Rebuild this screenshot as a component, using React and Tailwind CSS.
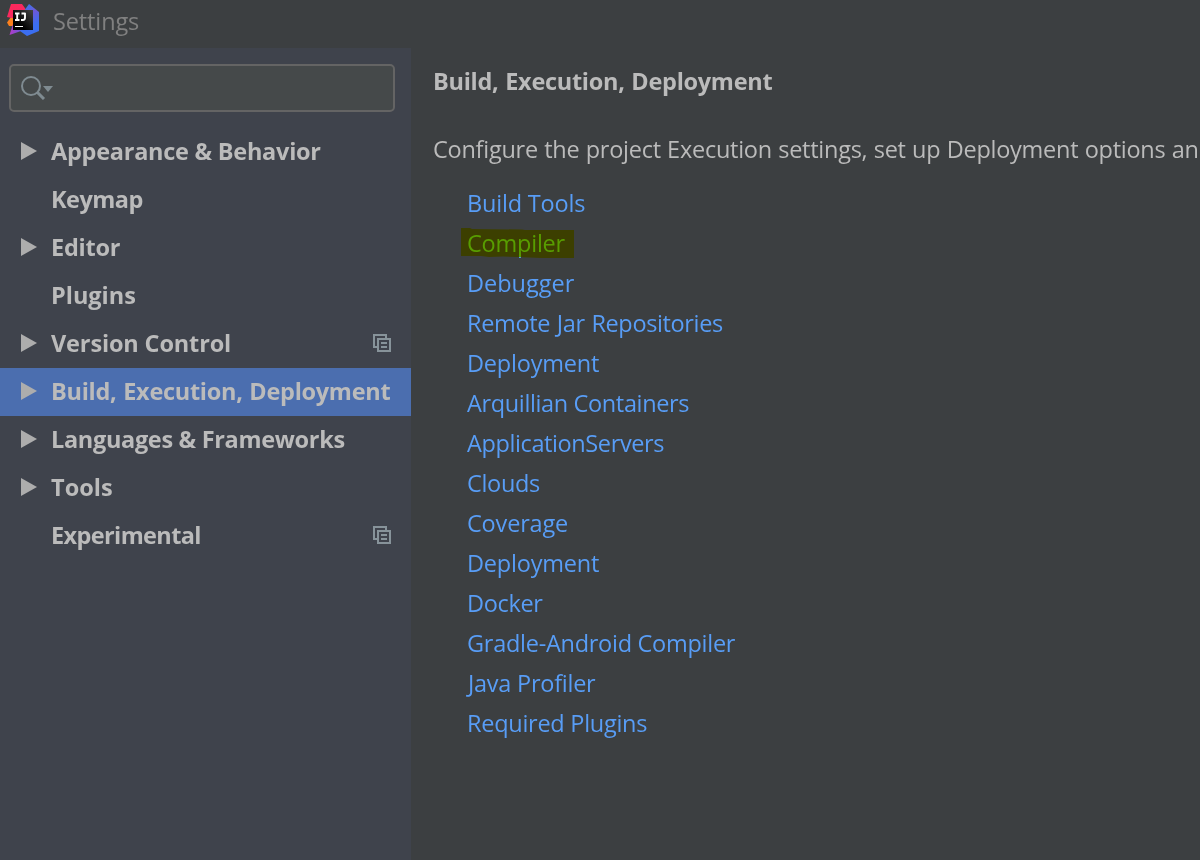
import React from "react";

const navItems = [
  { label: "Appearance & Behavior", expandable: true, tracking: "tracking-[-0.26px]" },
  { label: "Keymap", tracking: "tracking-[-0.55px]" },
  { label: "Editor", expandable: true, tracking: "tracking-[-0.22px]" },
  { label: "Plugins", tracking: "tracking-[-0.02px]" },
  { label: "Version Control", expandable: true, project: true, tracking: "tracking-[-0.15px]" },
  { label: "Build, Execution, Deployment", expandable: true, selected: true, tracking: "tracking-[-0.29px] [word-spacing:1px]" },
  { label: "Languages & Frameworks", expandable: true, tracking: "tracking-[-0.32px]" },
  { label: "Tools", expandable: true, tracking: "tracking-[0.05px]" },
  { label: "Experimental", project: true, tracking: "tracking-[-0.62px]" },
];

const links = [
  { label: "Build Tools", tracking: "tracking-[-0.18px]" },
  { label: "Compiler", tracking: "tracking-[-0.22px]", highlighted: true },
  { label: "Debugger", tracking: "tracking-normal" },
  { label: "Remote Jar Repositories", tracking: "tracking-[-0.36px] [word-spacing:1px]" },
  { label: "Deployment", tracking: "tracking-[-0.2px]" },
  { label: "Arquillian Containers", tracking: "tracking-[-0.36px]" },
  { label: "ApplicationServers", tracking: "tracking-[-0.39px]" },
  { label: "Clouds", tracking: "tracking-[-0.33px]" },
  { label: "Coverage", tracking: "tracking-[-0.18px]" },
  { label: "Deployment", tracking: "tracking-[-0.2px]" },
  { label: "Docker", tracking: "tracking-[-0.33px]" },
  { label: "Gradle-Android Compiler", tracking: "tracking-[-0.27px]" },
  { label: "Java Profiler", tracking: "tracking-[-0.25px] pl-px" },
  { label: "Required Plugins", tracking: "tracking-[-0.27px]" },
];

function Logo() {
  return (
    <svg className="h-8 w-8" viewBox="0 0 32 32">
      <defs>
        <linearGradient id="pink" x1="0" y1="0" x2="1" y2="1"><stop offset="0" stopColor="#fe2857" /><stop offset="1" stopColor="#f12a6a" /></linearGradient>
        <linearGradient id="blue" x1="0.2" y1="0" x2="0.5" y2="1"><stop offset="0" stopColor="#2b7df2" /><stop offset="0.35" stopColor="#6d58d8" /><stop offset="0.75" stopColor="#3b6ef0" /><stop offset="1" stopColor="#3b6ef0" /></linearGradient>
        <linearGradient id="violet" x1="0" y1="0" x2="1" y2="0"><stop offset="0" stopColor="#b43bc4" /><stop offset="1" stopColor="#6a55dc" /></linearGradient>
        <linearGradient id="ink" x1="1" y1="0" x2="0.3" y2="0.7"><stop offset="0" stopColor="#444" /><stop offset="1" stopColor="#000" /></linearGradient>
      </defs>
      <path d="M0 18.500L4 13h4v9H2z" fill="#fc801d" />
      <path d="M4 0h11l5 7-10 8-10-2z" fill="url(#pink)" />
      <path d="M6 20h8v7L2.500 31z" fill="url(#violet)" />
      <path d="M22 0l10 8v19l-12 5-7-5 4-20z" fill="url(#blue)" />
      <rect x="6" y="6" width="20" height="20" fill="url(#ink)" />
      <path d="M8 9.500h4.500M8 16h4.500M10.200 9v7M14.500 9.500h4M18 9v4.500q0 2.500-2 2.500h-2" fill="none" stroke="#fff" strokeWidth="1.900" />
      <path d="M8 22.500h8" stroke="#fff" />
    </svg>
  );
}

function NavItem({ item }) {
  return (
    <li className={"flex h-12 items-center pb-0.5 pl-[21px] pr-5 " + (item.selected ? "bg-[#4b6eaf]" : "")}>
      <span className="w-[30px] shrink-0">
        {item.expandable && (
          <svg className="h-[18px] w-4" viewBox="0 0 16 18"><path d="M0 0l16 9-16 9z" fill="#adadad" /></svg>
        )}
      </span>
      <span className={"grow whitespace-nowrap font-bold " + item.tracking}>{item.label}</span>
      {item.project && (
        <svg className="h-[18px] w-[18px] shrink-0" viewBox="0 0 18 18" fill="none" stroke="#87939a" strokeWidth="2">
          <path d="M13 4V1H1v12h3M5 5h12v12H5zM8 9h6M8 13h6" />
        </svg>
      )}
    </li>
  );
}

export default function App() {
  return (
    <div className="flex h-[860px] w-[1200px] flex-col overflow-hidden bg-[#3c3f41] font-['Open_Sans',sans-serif] text-[23.5px] leading-8 text-[#bbbbbb]">
      <header className="flex h-12 shrink-0 items-start pl-[7px] pt-1">
        <Logo />
        <span className="ml-[14px] mt-px tracking-[-0.12px] text-[#808080]">Settings</span>
      </header>
      <div className="flex min-h-0 grow">
        <aside className="w-[411px] shrink-0 bg-[#3f434c] pt-4">
          <div className="ml-[9px] flex h-12 w-[386px] items-center rounded-[5px] border-2 border-[#646464] bg-[#45494a] pl-2.5">
            <svg className="h-6 w-8" viewBox="0 0 32 24">
              <circle cx="10" cy="10" r="9" fill="none" stroke="#7f8b91" strokeWidth="2" />
              <path d="M16 16l7 7" stroke="#7f8b91" strokeWidth="3" />
              <path d="M22 10h10l-5 6z" fill="#7f8b91" />
            </svg>
          </div>
          <ul className="mt-4">{navItems.map((item) => <NavItem key={item.label} item={item} />)}</ul>
        </aside>
        <main className="grow pl-[22px] pt-[17px]">
          <h1 className="font-bold tracking-[-0.29px] [word-spacing:1px]">Build, Execution, Deployment</h1>
          <p className="mt-9 whitespace-nowrap tracking-[-0.26px] [word-spacing:0.5px]">
            Configure the project Execution settings, set up Deployment options an
          </p>
          <ul className="ml-[34px] mt-[22px] text-[#589df6]">
            {links.map((link, i) => (
              <li key={i} className="h-10 whitespace-nowrap">
                <a className={"relative inline-block " + link.tracking}>
                  {link.label}
                  {link.highlighted && (
                    <svg className="absolute -left-1.5 top-px h-[30px] w-[113px] mix-blend-multiply" viewBox="0 0 113 30">
                      <path d="M0 0h9l2 1 50 .5L64 2h49v28H80l-24-1-14-.5-14 .5-8-1H0z" fill="#ff0" />
                    </svg>
                  )}
                </a>
              </li>
            ))}
          </ul>
        </main>
      </div>
    </div>
  );
}
